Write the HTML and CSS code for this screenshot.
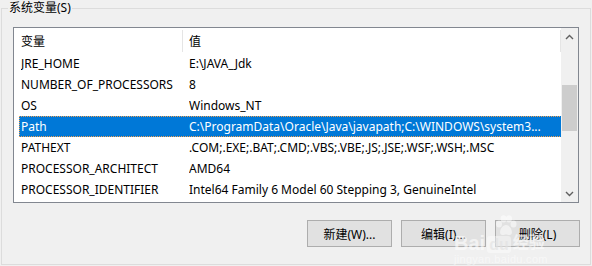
FILE: index.html
```html
<!DOCTYPE html>
<html lang="zh-CN">
<head>
    <meta charset="UTF-8">
    <title>系统变量</title>
    <link rel="stylesheet" href="styles.css">
</head>
<body>
    <fieldset class="group">
        <legend>系统变量(S)</legend>

        <div class="listbox">
            <div class="list">
                <div class="list-header">
                    <div class="col-head first">变量</div>
                    <div class="col-head">值</div>
                </div>
                <div class="row"><span>JRE_HOME</span><span>E:\JAVA_Jdk</span></div>
                <div class="row"><span>NUMBER_OF_PROCESSORS</span><span>8</span></div>
                <div class="row"><span>OS</span><span>Windows_NT</span></div>
                <div class="row selected"><span>Path</span><span>C:\ProgramData\Oracle\Java\javapath;C:\WINDOWS\system3...</span></div>
                <div class="row"><span>PATHEXT</span><span>.COM;.EXE;.BAT;.CMD;.VBS;.VBE;.JS;.JSE;.WSF;.WSH;.MSC</span></div>
                <div class="row"><span>PROCESSOR_ARCHITECT</span><span>AMD64</span></div>
                <div class="row"><span>PROCESSOR_IDENTIFIER</span><span>Intel64 Family 6 Model 60 Stepping 3, GenuineIntel</span></div>
            </div>
            <div class="scrollbar">
                <div class="arrow">
                    <svg width="9" height="6" viewBox="0 0 9 6"><path d="M1 5 L4.5 1.5 L8 5" fill="none" stroke="#606060" stroke-width="1.4"/></svg>
                </div>
                <div class="track">
                    <div class="thumb"></div>
                </div>
                <div class="arrow">
                    <svg width="9" height="6" viewBox="0 0 9 6"><path d="M1 1 L4.5 4.5 L8 1" fill="none" stroke="#606060" stroke-width="1.4"/></svg>
                </div>
            </div>
        </div>

        <div class="buttons">
            <button>新建(W)...</button>
            <button>编辑(I)...</button>
            <button>删除(L)</button>
        </div>

        <!-- faint site watermark over the bottom-right corner -->
        <div class="watermark">
            <svg class="wm-paw" width="24" height="22" viewBox="0 0 24 22">
                <ellipse cx="5" cy="9" rx="3" ry="3.6"/>
                <ellipse cx="9.5" cy="3.8" rx="3" ry="3.6"/>
                <ellipse cx="15" cy="3.8" rx="3" ry="3.6"/>
                <ellipse cx="19.5" cy="9" rx="3" ry="3.6"/>
                <path d="M12 10 C8 10 5 16 6.5 19 C8 21 10.5 19.5 12 19.5 C13.5 19.5 16 21 17.5 19 C19 16 16 10 12 10 Z"/>
            </svg>
            <div class="wm-top">
                <span class="wm-bai">Bai</span>
                <span class="wm-du">du</span>
                <span class="wm-jy">经验</span>
            </div>
            <div class="wm-url">jingyan.baidu.com</div>
        </div>
    </fieldset>
</body>
</html>
```

FILE: styles.css
```css
* {
    box-sizing: border-box;
}

body {
    margin: 0;
    width: 592px;
    height: 266px;
    background: #f0f0f0;
    font-family: "Noto Sans", "Noto Sans CJK SC", sans-serif;
    font-size: 12px;
    color: #000;
    overflow: hidden;
}

.group {
    position: relative;
    margin: 0 0 0 1px;
    width: 590px;
    height: 265px;
    border: 1px solid #dcdcdc;
    padding: 11px 11px 0 11px;
}

.group legend {
    padding: 0 1px;
    margin-left: -5px;
    line-height: 16px;
    height: 16px;
}

.listbox {
    display: flex;
    width: 566px;
    height: 176px;
    border: 1px solid #828790;
    background: #fff;
}

.list {
    flex: 1;
    overflow: hidden;
}

.list-header {
    display: flex;
    height: 25px;
    align-items: stretch;
}

.col-head {
    display: flex;
    align-items: center;
    padding-left: 6px;
    flex: 1;
    border-right: 1px solid #e5e5e5;
    margin: 2px 0 1px;
}

.col-head.first {
    flex: 0 0 169px;
    padding-left: 7px;
}

.row {
    display: grid;
    grid-template-columns: 168px 1fr;
    height: 21px;
    line-height: 21px;
    margin-left: 5px;
    padding-left: 2px;
    white-space: nowrap;
}

.row span {
    overflow: hidden;
}

.row.selected {
    background: #0078d7;
    color: #fff;
    outline: 1px dotted #f0a050;
    outline-offset: -1px;
    margin-right: -1px;
}

.scrollbar {
    width: 17px;
    display: flex;
    flex-direction: column;
    background: #f0f0f0;
}

.arrow {
    height: 17px;
    display: flex;
    align-items: center;
    justify-content: center;
}

.track {
    flex: 1;
    padding: 40px 1px 0;
}

.thumb {
    height: 46px;
    background: #cdcdcd;
}

.buttons {
    display: flex;
    justify-content: flex-end;
    gap: 9px;
    margin-top: 17px;
    margin-right: -1px;
}

button {
    width: 85px;
    height: 27px;
    border: 1px solid #adadad;
    background: #e1e1e1;
    font-family: inherit;
    font-size: 12px;
    color: #000;
    padding: 0;
}

.watermark {
    position: absolute;
    left: 452px;
    top: 199px;
    width: 108px;
    color: rgba(255, 255, 255, 0.6);
    pointer-events: none;
}

.wm-paw {
    display: block;
    margin-left: 40px;
    fill: rgba(255, 255, 255, 0.55);
}

.wm-top {
    display: flex;
    align-items: flex-end;
    gap: 2px;
    margin-top: -6px;
    font-family: "Liberation Sans", sans-serif;
    font-weight: bold;
    font-size: 20px;
    line-height: 20px;
}

.wm-du {
    background: rgba(255, 255, 255, 0.4);
    color: rgba(225, 225, 225, 0.6);
    border-radius: 3px;
    padding: 0 2px;
    font-size: 16px;
    line-height: 17px;
}

.wm-jy {
    font-family: "Noto Sans CJK SC", sans-serif;
    font-size: 16px;
    margin-bottom: 2px;
}

.wm-url {
    font-family: "Liberation Sans", sans-serif;
    font-size: 11px;
    line-height: 12px;
    letter-spacing: 0.3px;
    color: rgba(255, 255, 255, 0.5);
}
```
